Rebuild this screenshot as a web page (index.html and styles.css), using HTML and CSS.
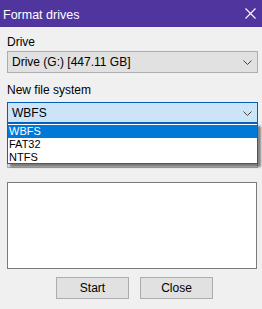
FILE: index.html
```html
<!DOCTYPE html>
<html lang="en">
<head>
    <meta charset="UTF-8">
    <title>Format drives</title>
    <link rel="stylesheet" href="styles.css">
</head>
<body>
    <div class="window">
        <div class="titlebar">
            <span class="title">Format drives</span>
            <svg class="close" width="11" height="11" viewBox="0 0 11 11">
                <path d="M0.5 0.5 L10.5 10.5 M10.5 0.5 L0.5 10.5" stroke="#fff" stroke-width="1.1" fill="none"/>
            </svg>
        </div>
        <div class="content">
            <div class="label">Drive</div>
            <div class="combo">
                <span>Drive (G:) [447.11 GB]</span>
                <svg class="arrow" width="9" height="5" viewBox="0 0 9 5"><path d="M0.5 0.5 L4.5 4.5 L8.5 0.5" stroke="#444" fill="none"/></svg>
            </div>

            <div class="label second">New file system</div>
            <div class="combo focus">
                <span>WBFS</span>
                <svg class="arrow" width="9" height="5" viewBox="0 0 9 5"><path d="M0.5 0.5 L4.5 4.5 L8.5 0.5" stroke="#444" fill="none"/></svg>
            </div>

            <!-- hidden under the open list -->
            <div class="label third"></div>
            <div class="combo"></div>

            <div class="log"></div>

            <div class="buttons">
                <div class="btn">Start</div>
                <div class="btn">Close</div>
            </div>
        </div>
        <ul class="dropdown">
            <li class="on">WBFS</li>
            <li>FAT32</li>
            <li>NTFS</li>
        </ul>
    </div>
</body>
</html>
```

FILE: styles.css
```css
*{
    margin:0;
    padding:0;
    list-style:none;
    box-sizing:border-box;
}
body{
    background:#f0f0f0;
    font-family:"Liberation Sans", Arial, sans-serif;
    font-size:12px;
    color:#000;
}
.window{
    position:relative;
    width:262px;
    height:309px;
}
.titlebar{
    display:flex;
    justify-content:space-between;
    align-items:center;
    height:27px;
    padding:2px 6px 0 3px;
    background:#51359f;
    color:#fff;
}
.title{
    font-size:12.5px;
}
.close{
    margin-bottom:2px;
}
.content{
    display:flex;
    flex-direction:column;
    padding:8px 4px 0 7px;
}
.label{
    height:15px;
    line-height:15px;
    margin-bottom:1px;
}
.label.second{
    margin-top:10px;
    margin-bottom:4px;
}
.label.third{
    margin-top:8px;
    margin-bottom:0;
}
.combo{
    display:flex;
    justify-content:space-between;
    align-items:center;
    height:22px;
    padding:0 5px 0 4px;
    background:#e1e1e1;
    border:1px solid #adadad;
}
.combo.focus{
    height:21px;
    background:#cce4f7;
    border-color:#005fb8;
}
.arrow{
    margin-top:1px;
}
.log{
    height:87px;
    margin-top:14px;
    margin-right:1px;
    background:#fff;
    border:1px solid #7a7a7a;
}
.buttons{
    display:flex;
    gap:11px;
    margin-top:8px;
    padding-left:49px;
}
.btn{
    width:73px;
    height:22px;
    line-height:20px;
    text-align:center;
    background:#e1e1e1;
    border:1px solid #adadad;
}
.dropdown{
    position:absolute;
    top:123px;
    left:7px;
    width:251px;
    height:41px;
    padding-top:1px;
    background:#fff;
    border:1px solid #1d5fa3;
    box-shadow:3px 3px 2px rgba(0,0,0,.45);
    font-size:11px;
}
.dropdown li{
    height:13px;
    line-height:13px;
    padding-left:1px;
}
.dropdown li.on{
    background:#0078d7;
    color:#fff;
}
```
